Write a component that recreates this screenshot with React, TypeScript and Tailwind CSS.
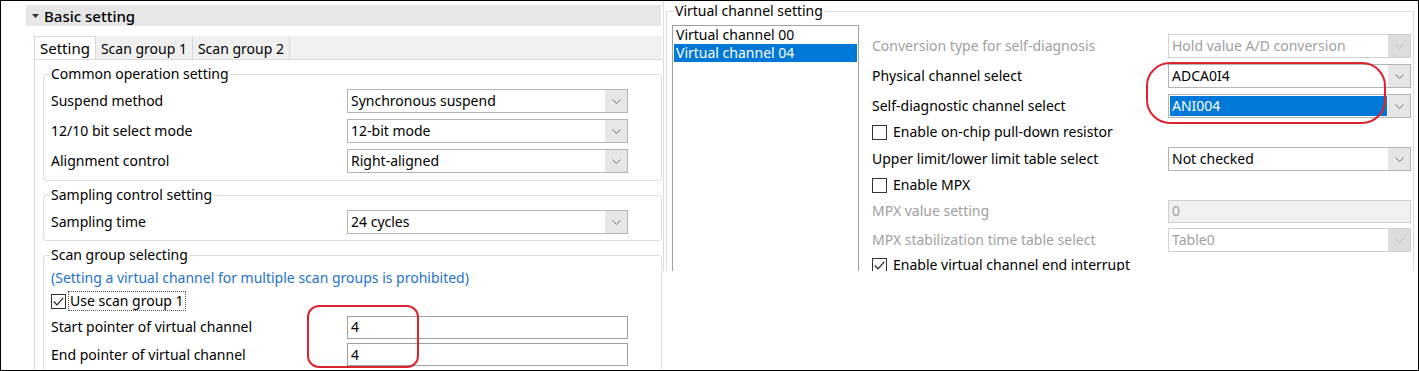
import React from 'react';

const Chevron = ({ disabled }: { disabled?: boolean }) => (
  <svg width="9" height="5" viewBox="0 0 9 5">
    <path d="M0.5 0.5 L4.5 4.5 L8.5 0.5" fill="none" stroke={disabled ? '#b8b8b8' : '#707070'} strokeWidth="1" />
  </svg>
);

const Select = ({
  value,
  wide,
  disabled,
  highlighted,
}: {
  value: string;
  wide?: boolean;
  disabled?: boolean;
  highlighted?: boolean;
}) => (
  <div
    className={`flex h-[24px] border ${wide ? 'w-[281px]' : 'w-[243px]'} ${
      disabled ? 'border-[#d0d0d0] text-[#a0a0a0]' : 'border-[#b4b4b4] text-black'
    } bg-white`}
  >
    <div className="flex flex-1 items-center p-[1px]">
      <div
        className={`flex h-full flex-1 items-center px-[2px] ${
          highlighted ? 'bg-[#0078d7] text-white' : ''
        }`}
      >
        {value}
      </div>
    </div>
    <div
      className={`flex w-[22px] items-center justify-center ${disabled ? 'bg-[#dcdcdc]' : 'bg-[#e6e6e6]'}`}
    >
      <Chevron disabled={disabled} />
    </div>
  </div>
);

const Checkbox = ({ checked }: { checked?: boolean }) => (
  <div className="flex h-[15px] w-[15px] items-center justify-center border border-[#333] bg-white">
    {checked && (
      <svg width="11" height="9" viewBox="0 0 11 9">
        <path d="M0.8 4.5 L4 7.8 L10.2 0.8" fill="none" stroke="#222" strokeWidth="1.2" />
      </svg>
    )}
  </div>
);

const GroupBox = ({
  title,
  className,
  children,
}: {
  title: string;
  className: string;
  children: React.ReactNode;
}) => (
  <div className={`relative rounded-[3px] border border-[#dcdcdc] ${className}`}>
    <span className="absolute -top-[11px] left-[6px] bg-white px-[1px] leading-[20px]">{title}</span>
    {children}
  </div>
);

const LeftRow = ({ label, children }: { label: string; children: React.ReactNode }) => (
  <div className="flex h-[30px] items-center pl-[7px]">
    <div className="w-[296px]">{label}</div>
    {children}
  </div>
);

const RightRow = ({
  label,
  h,
  disabled,
  children,
}: {
  label: string;
  h: string;
  disabled?: boolean;
  children?: React.ReactNode;
}) => (
  <div className={`flex items-center ${h}`}>
    <div className={`w-[296px] ${disabled ? 'text-[#a0a0a0]' : ''}`}>{label}</div>
    {children}
  </div>
);

const CheckRow = ({ label, h, checked }: { label: string; h: string; checked?: boolean }) => (
  <div className={`flex items-center gap-[6px] ${h}`}>
    <Checkbox checked={checked} />
    <span>{label}</span>
  </div>
);

export default function App() {
  return (
    <div className="relative flex h-[371px] w-[1419px] overflow-hidden border border-black bg-white font-['Noto_Sans',sans-serif] text-[14px] leading-[20px] text-black">
      {/* Left: Basic setting */}
      <div className="w-[662px] shrink-0">
        <div className="ml-[25px] mt-[4px] flex h-[21px] w-[635px] items-center gap-[5px] bg-[#e6e6e6] pl-[6px] text-[15px] font-medium">
          <svg width="7" height="4" viewBox="0 0 7 4">
            <path d="M0 0 L7 0 L3.5 4 Z" fill="#333" />
          </svg>
          <span>Basic setting</span>
        </div>

        <div className="ml-[33px] mt-[10px] w-[628px]">
          <div className="flex h-[24px] border-b border-[#d9d9d9] bg-[#f0f0f0]">
            <div className="flex items-center border border-b-0 border-[#d9d9d9] bg-white px-[5px] text-[15px]">Setting</div>
            <div className="flex items-center border-r border-[#d9d9d9] px-[5px] pt-[2px]">Scan group 1</div>
            <div className="flex items-center border-r border-[#d9d9d9] px-[5px] pt-[2px]">Scan group 2</div>
          </div>

          <div className="border-l border-[#d9d9d9] pb-[20px] pl-[8px] pt-[14px]">
            <GroupBox title="Common operation setting" className="pb-[4px] pt-[11px]">
              <LeftRow label="Suspend method">
                <Select wide value="Synchronous suspend" />
              </LeftRow>
              <LeftRow label="12/10 bit select mode">
                <Select wide value="12-bit mode" />
              </LeftRow>
              <LeftRow label="Alignment control">
                <Select wide value="Right-aligned" />
              </LeftRow>
            </GroupBox>

            <GroupBox title="Sampling control setting" className="mt-[14px] pb-[3px] pt-[11px]">
              <LeftRow label="Sampling time">
                <Select wide value="24 cycles" />
              </LeftRow>
            </GroupBox>

            <GroupBox title="Scan group selecting" className="mt-[14px] pb-[10px] pt-[11px]">
              <div className="flex h-[22px] items-center pl-[7px] text-[#1e72c8]">
                (Setting a virtual channel for multiple scan groups is prohibited)
              </div>
              <div className="flex h-[24px] items-center gap-[2px] pl-[7px]">
                <Checkbox checked />
                <span className="border border-dotted border-[#555] px-[1px] leading-[18px]">Use scan group 1</span>
              </div>
              <div className="flex h-[28px] items-center pl-[7px]">
                <div className="w-[296px]">Start pointer of virtual channel</div>
                <div className="flex h-[23px] w-[281px] items-center border border-[#a0a0a0] px-[3px]">4</div>
              </div>
              <div className="flex h-[27px] items-center pl-[7px]">
                <div className="w-[296px]">End pointer of virtual channel</div>
                <div className="flex h-[23px] w-[281px] items-center border border-[#a0a0a0] px-[3px]">4</div>
              </div>
            </GroupBox>
          </div>
        </div>
      </div>

      {/* Right: Virtual channel setting */}
      <div className="h-[270px] w-[755px] shrink-0 overflow-hidden border-l border-[#dcdcdc]">
        <div className="relative ml-[2px] mt-[10px] h-[300px] w-[748px] border border-[#dcdcdc]">
          <span className="absolute -top-[11px] left-[7px] bg-white px-[1px] leading-[20px]">
            Virtual channel setting
          </span>
          <div className="flex pl-[5px] pt-[13px]">
            <div className="h-[280px] w-[187px] border border-[#a0a0a0]">
              <div className="flex h-[18px] items-center pl-[3px]">Virtual channel 00</div>
              <div className="mx-[1px] flex h-[18px] items-center bg-[#0078d7] pl-[2px] text-white">
                Virtual channel 04
              </div>
            </div>

            <div className="ml-[13px] flex flex-col pt-[6px]">
              <RightRow label="Conversion type for self-diagnosis" h="h-[30px]" disabled>
                <Select disabled value="Hold value A/D conversion" />
              </RightRow>
              <RightRow label="Physical channel select" h="h-[30px]">
                <Select value="ADCA0I4" />
              </RightRow>
              <RightRow label="Self-diagnostic channel select" h="h-[30px]">
                <Select highlighted value="ANI004" />
              </RightRow>
              <CheckRow label="Enable on-chip pull-down resistor" h="h-[22px]" />
              <RightRow label="Upper limit/lower limit table select" h="h-[32px]">
                <Select value="Not checked" />
              </RightRow>
              <CheckRow label="Enable MPX" h="h-[20px]" />
              <RightRow label="MPX value setting" h="h-[32px]" disabled>
                <div className="flex h-[23px] w-[243px] items-center border border-[#d0d0d0] bg-[#f0f0f0] px-[3px] text-[#a0a0a0]">
                  0
                </div>
              </RightRow>
              <RightRow label="MPX stabilization time table select" h="h-[26px]" disabled>
                <Select disabled value="Table0" />
              </RightRow>
              <CheckRow label="Enable virtual channel end interrupt" h="h-[24px]" checked />
            </div>
          </div>
        </div>
      </div>

      {/* Red highlight marks */}
      <div className="absolute left-[306px] top-[304px] h-[63px] w-[112px] rounded-[12px] border-2 border-[#dc2430]" />
      <div className="absolute left-[1145px] top-[61px] h-[62px] w-[240px] rounded-[24px] border-2 border-[#dc2430]" />
    </div>
  );
}
